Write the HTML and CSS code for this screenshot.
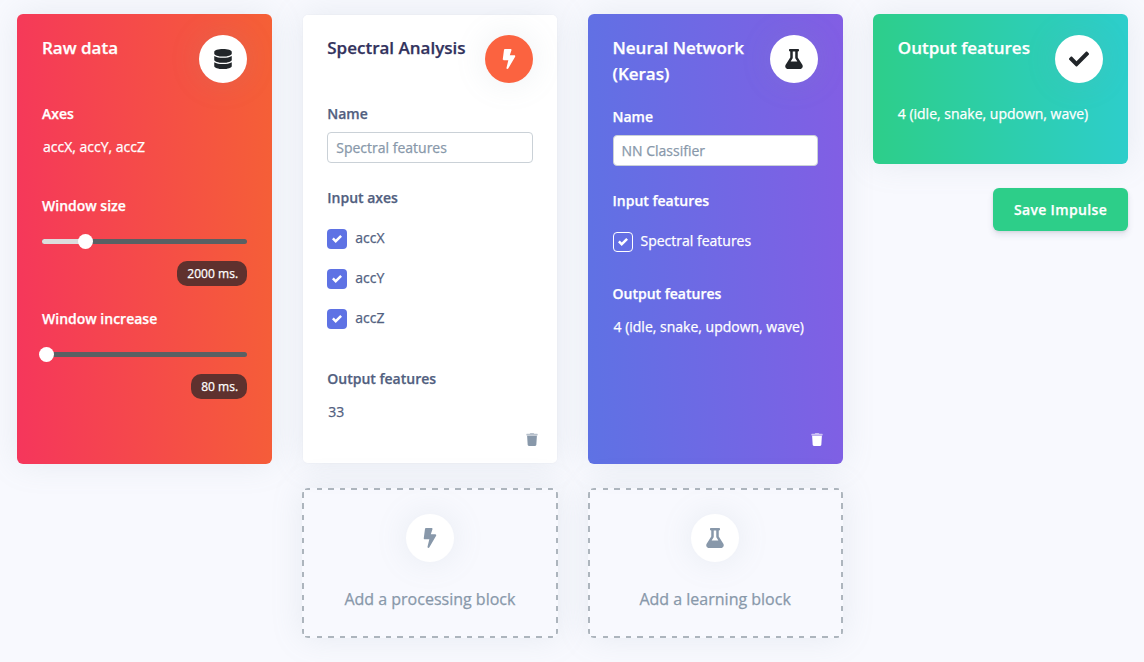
FILE: index.html
```
<!DOCTYPE html>
<html lang="en">
<head>
    <meta charset="UTF-8">
    <meta name="viewport" content="width=device-width, initial-scale=1.0">
    <title>Create impulse</title>
    <link rel="stylesheet" href="styles.css">
</head>
<body>
    <svg class="icon-defs">
        <symbol id="icon-database" viewBox="0 0 448 512"><path d="M448 73.143v45.714C448 159.143 347.667 192 224 192S0 159.143 0 118.857V73.143C0 32.857 100.333 0 224 0s224 32.857 224 73.143zM448 176v102.857C448 319.143 347.667 352 224 352S0 319.143 0 278.857V176c48.125 33.143 136.208 48.572 224 48.572S399.874 209.143 448 176zm0 160v102.857C448 479.143 347.667 512 224 512S0 479.143 0 438.857V336c48.125 33.143 136.208 48.572 224 48.572S399.874 369.143 448 336z"/></symbol>
        <symbol id="icon-bolt" viewBox="0 0 320 512"><path d="M296 160H180.600l42.600-129.800C227.200 15 215.700 0 200 0H56C44 0 33.800 8.900 32.200 20.800l-32 240C-1.700 275.200 9.500 288 24 288h118.700L96.600 482.500c-3.600 15.200 8 29.500 23.300 29.500 8.400 0 16.400-4.400 20.800-12l176-304c9.300-15.900-2.200-36-20.700-36z"/></symbol>
        <symbol id="icon-flask" viewBox="0 0 448 512"><path fill-rule="evenodd" d="M437.200 403.500L320 215V64h8c13.300 0 24-10.700 24-24V24c0-13.300-10.700-24-24-24H120c-13.300 0-24 10.700-24 24v16c0 13.300 10.700 24 24 24h8v151L10.800 403.500C-18.500 450.600 15.300 512 70.900 512h306.200c55.700 0 89.400-61.500 60.100-108.500zM137.900 320l48.200-77.600c3.700-5.200 5.800-11.600 5.800-18.400V64h64v160c0 6.900 2.200 13.200 5.800 18.400l48.200 77.600h-172z"/></symbol>
        <symbol id="icon-check" viewBox="0 0 512 512"><path d="M173.898 439.404l-166.400-166.400c-9.997-9.997-9.997-26.206 0-36.204l36.203-36.204c9.997-9.998 26.207-9.998 36.204 0L192 312.690 432.095 72.596c9.997-9.997 26.207-9.997 36.204 0l36.203 36.204c9.997 9.997 9.997 26.206 0 36.204l-294.400 294.401c-9.998 9.997-26.207 9.997-36.204-.001z"/></symbol>
        <symbol id="icon-trash" viewBox="0 0 448 512"><path opacity="0.6" d="M432 32H312l-9.400-18.700A24 24 0 0 0 281.100 0H166.800a23.720 23.720 0 0 0-21.400 13.300L136 32H16A16 16 0 0 0 0 48v32a16 16 0 0 0 16 16h416a16 16 0 0 0 16-16V48a16 16 0 0 0-16-16z"/><path d="M53.200 467a48 48 0 0 0 47.900 45h245.800a48 48 0 0 0 47.900-45L416 112H32z"/></symbol>
        <symbol id="icon-tick" viewBox="0 0 8 8"><path d="M6.564.75l-3.590 3.612-1.538-1.550L0 4.260 2.974 7.250 8 2.193z"/></symbol>
    </svg>

    <div class="container">
        <div class="column">
            <div class="card card-raw">
                <div class="card-header">
                    <h2>Raw data</h2>
                    <div class="icon-circle"><svg><use href="#icon-database"/></svg></div>
                </div>
                <h3>Axes</h3>
                <p class="value">accX, accY, accZ</p>
                <h3 class="window-label">Window size</h3>
                <div class="slider slider-size"><span class="slider-fill"></span><span class="slider-handle"></span></div>
                <div class="slider-value"><span>2000 ms.</span></div>
                <h3 class="increase-label">Window increase</h3>
                <div class="slider"><span class="slider-handle"></span></div>
                <div class="slider-value"><span>80 ms.</span></div>
            </div>
        </div>

        <div class="column">
            <div class="card card-dsp">
                <div class="card-header">
                    <h2>Spectral Analysis</h2>
                    <div class="icon-circle"><svg><use href="#icon-bolt"/></svg></div>
                </div>
                <h3>Name</h3>
                <input type="text" class="name-input" value="Spectral features">
                <h3>Input axes</h3>
                <div class="checks">
                    <div class="check"><span class="check-box"><svg><use href="#icon-tick"/></svg></span>accX</div>
                    <div class="check"><span class="check-box"><svg><use href="#icon-tick"/></svg></span>accY</div>
                    <div class="check"><span class="check-box"><svg><use href="#icon-tick"/></svg></span>accZ</div>
                </div>
                <h3>Output features</h3>
                <p class="value">33</p>
                <a class="trash"><svg><use href="#icon-trash"/></svg></a>
            </div>
            <div class="card card-add">
                <div class="icon-circle"><svg><use href="#icon-bolt"/></svg></div>
                <p>Add a processing block</p>
            </div>
        </div>

        <div class="column">
            <div class="card card-nn">
                <div class="card-header">
                    <h2>Neural Network (Keras)</h2>
                    <div class="icon-circle"><svg><use href="#icon-flask"/></svg></div>
                </div>
                <h3>Name</h3>
                <input type="text" class="name-input" value="NN Classifier">
                <h3>Input features</h3>
                <div class="checks">
                    <div class="check"><span class="check-box"><svg><use href="#icon-tick"/></svg></span>Spectral features</div>
                </div>
                <h3>Output features</h3>
                <p class="value">4 (idle, snake, updown, wave)</p>
                <a class="trash"><svg><use href="#icon-trash"/></svg></a>
            </div>
            <div class="card card-add">
                <div class="icon-circle"><svg><use href="#icon-flask"/></svg></div>
                <p>Add a learning block</p>
            </div>
        </div>

        <div class="column">
            <div class="card card-output">
                <div class="card-header">
                    <h2>Output features</h2>
                    <div class="icon-circle"><svg><use href="#icon-check"/></svg></div>
                </div>
                <p class="output-value">4 (idle, snake, updown, wave)</p>
            </div>
            <button type="button" class="save-button">Save Impulse</button>
        </div>
    </div>
</body>
</html>
```
FILE: styles.css
```
* {
    box-sizing: border-box;
}
body {
    margin: 0;
    font-family: "Open Sans", sans-serif;
    font-size: 14px;
    line-height: 21px;
    color: #525f7f;
    background-color: #f8f9fe;
    -webkit-text-stroke: 0.25px;
}
h2, h3, p {
    margin: 0;
}
svg {
    display: block;
    fill: currentColor;
}
.icon-defs {
    display: none;
}
.container {
    display: grid;
    grid-template-columns: repeat(4, 1fr);
    gap: 30px;
    padding: 14px 16px 24px 17px;
}
.column {
    display: flex;
    flex-direction: column;
    gap: 24px;
}
.card {
    display: flex;
    flex-direction: column;
    height: 450px;
    padding: 21px 25px 14px;
    border-radius: 6px;
    color: white;
    box-shadow: 0 0 32px 0 rgba(136, 152, 170, 0.15);
}
.card-raw {
    background: linear-gradient(87deg, #f5365c 0%, #f56036 100%);
}
.card-dsp {
    color: #525f7f;
    background-color: white;
    background-clip: padding-box;
    border: 1px solid rgba(0, 0, 0, 0.01);
    padding: 20px 24px 13px;
}
.card-nn {
    background: linear-gradient(87deg, #5e72e4 0%, #825ee4 100%);
}
.card-output {
    height: 150px;
    background: linear-gradient(87deg, #2dce89 0%, #2dcecc 100%);
}
.card-header {
    display: flex;
    justify-content: space-between;
    height: 68px;
}
.card-nn .card-header {
    height: 71px;
}
h2 {
    font-size: 17px;
    font-weight: 600;
    line-height: 25.500px;
}
.card-dsp h2 {
    color: #32325d;
}
h3 {
    font-size: 14px;
    font-weight: 600;
    line-height: 21px;
}
.icon-circle {
    display: flex;
    flex: none;
    align-items: center;
    justify-content: center;
    width: 48px;
    height: 48px;
    border-radius: 50%;
    color: #212529;
    background-color: white;
    box-shadow: 0 0 32px 0 rgba(136, 152, 170, 0.15);
}
.icon-circle svg {
    width: 20px;
    height: 20px;
}
.card-dsp .icon-circle {
    color: white;
    background-color: #fb6340;
}
.value {
    padding: 12px 1px 0;
}
.window-label {
    margin-top: 38px;
}
.increase-label {
    margin-top: 22px;
}
.slider {
    display: flex;
    align-items: center;
    height: 5px;
    margin-top: 23px;
    border-radius: 5px;
    background-color: #5a6063;
}
.slider-fill {
    width: 39px;
    height: 5px;
    border-radius: 5px 0 0 5px;
    background-color: #ddd;
}
.slider-handle {
    flex: none;
    width: 15px;
    height: 15px;
    margin-left: -3px;
    border-radius: 50%;
    background-color: white;
}
.slider-value {
    display: flex;
    justify-content: flex-end;
    margin-top: 17px;
}
.slider-value span {
    padding: 4px 9px 3px 10px;
    border-radius: 10px;
    font-size: 12px;
    line-height: 18px;
    letter-spacing: 0.050px;
    background-color: #5f312e;
}
.name-input {
    width: 100%;
    height: 31px;
    margin: 8px 0 24px;
    padding: 4px 8px;
    border: 1px solid #cad1d7;
    border-radius: 4px;
    font-family: inherit;
    font-size: 14px;
    color: #8898aa;
    background-color: white;
    -webkit-text-stroke: 0.25px;
}
.checks {
    display: flex;
    flex-direction: column;
    gap: 18px;
    margin: 19px 0 39px;
}
.card-nn .checks {
    margin-bottom: 31px;
}
.check {
    display: flex;
    gap: 8px;
}
.check-box {
    display: flex;
    align-items: center;
    justify-content: center;
    width: 20px;
    height: 20px;
    margin-top: 2px;
    border-radius: 4px;
    color: white;
    background-color: #5e72e4;
}
.check-box svg {
    width: 10px;
    height: 10px;
}
.card-nn .check-box {
    border: 1px solid white;
    background-color: transparent;
}
.trash {
    margin: auto -5px 4px auto;
    color: #8898aa;
}
.trash svg {
    width: 12px;
    height: 13px;
}
.card-nn .trash {
    color: white;
}
/* dashed outline is built from four gradient strips to control the dash length */
.card-add {
    --dash: #adb5bd 0 5.500px, transparent 5.500px;
    align-items: center;
    height: 150px;
    padding: 26px;
    font-size: 16px;
    line-height: 24px;
    color: #8898aa;
    background:
        repeating-linear-gradient(90deg, var(--dash) 11.550px) center top / calc(100% - 7px) 2px no-repeat,
        repeating-linear-gradient(90deg, var(--dash) 11.550px) center bottom / calc(100% - 7px) 2px no-repeat,
        repeating-linear-gradient(180deg, var(--dash) 11.400px) left center / 2px calc(100% - 7px) no-repeat,
        repeating-linear-gradient(180deg, var(--dash) 11.400px) right center / 2px calc(100% - 7px) no-repeat;
}
.card-add .icon-circle {
    color: #8898aa;
}
.card-add p {
    margin-top: 25px;
}
.save-button {
    align-self: flex-end;
    width: 135px;
    height: 43px;
    border: none;
    border-radius: 6px;
    font-family: inherit;
    font-size: 14px;
    font-weight: 600;
    letter-spacing: 0.350px;
    color: white;
    background-color: #2dce89;
    box-shadow: 0 4px 6px rgba(50, 50, 93, 0.11), 0 1px 3px rgba(0, 0, 0, 0.08);
    -webkit-text-stroke: 0.25px;
}
```
